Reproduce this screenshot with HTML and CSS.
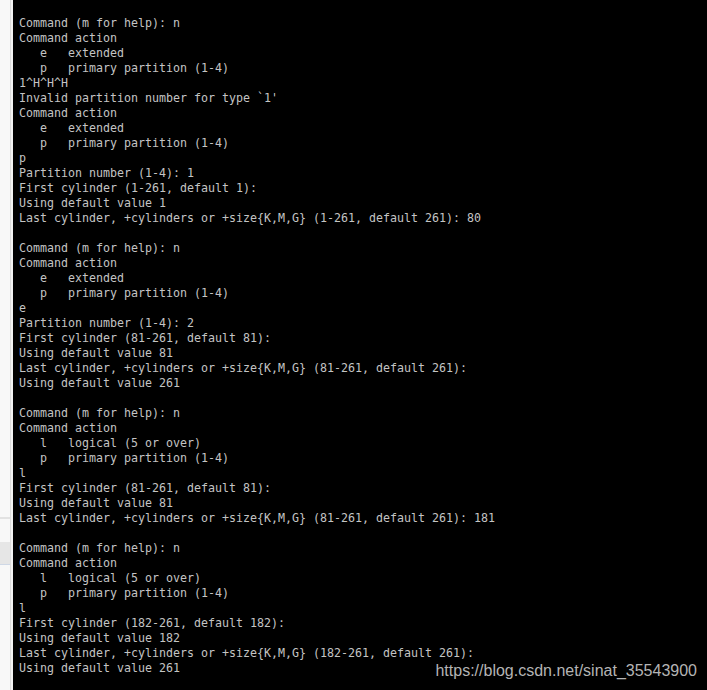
FILE: index.html
```html
<!DOCTYPE html>
<html>
<head>
<meta charset="utf-8">
<link rel="stylesheet" href="styles.css">
</head>
<body>
<div class="page">
  <div class="side">
    <div class="side-top"></div>
    <div class="side-line"></div>
    <div class="side-mid"></div>
    <div class="side-block"></div>
    <div class="side-rest"></div>
  </div>
  <div class="terminal">
<pre class="out">Command (m for help): n
Command action
   e   extended
   p   primary partition (1-4)
1^H^H^H
Invalid partition number for type `1'
Command action
   e   extended
   p   primary partition (1-4)
p
Partition number (1-4): 1
First cylinder (1-261, default 1):
Using default value 1
Last cylinder, +cylinders or +size{K,M,G} (1-261, default 261): 80

Command (m for help): n
Command action
   e   extended
   p   primary partition (1-4)
e
Partition number (1-4): 2
First cylinder (81-261, default 81):
Using default value 81
Last cylinder, +cylinders or +size{K,M,G} (81-261, default 261):
Using default value 261

Command (m for help): n
Command action
   l   logical (5 or over)
   p   primary partition (1-4)
l
First cylinder (81-261, default 81):
Using default value 81
Last cylinder, +cylinders or +size{K,M,G} (81-261, default 261): 181

Command (m for help): n
Command action
   l   logical (5 or over)
   p   primary partition (1-4)
l
First cylinder (182-261, default 182):
Using default value 182
Last cylinder, +cylinders or +size{K,M,G} (182-261, default 261):
Using default value 261</pre>
    <div class="watermark">https://blog.csdn.net/sinat_35543900</div>
  </div>
</div>
</body>
</html>
```

FILE: styles.css
```css
html, body {
  margin: 0;
  padding: 0;
  background: #000;
}
.page {
  display: flex;
  width: 707px;
  height: 690px;
  overflow: hidden;
}
.side {
  width: 10px;
  display: flex;
  flex-direction: column;
  border-right: 1px solid #dcdcdc;
  background: #f8f8f8;
  margin-right: 2px;
  outline: 2px solid #f3f3f3;
}
.side-top { height: 517px; background: #f8f8f8; }
.side-line { height: 2px; background: #e2e2e2; }
.side-mid { height: 23px; background: #f8f8f8; }
.side-block { height: 22px; background: #e6e6e6; border-bottom: 1px solid #cfd8e6; }
.side-rest { flex: 1; background: #f8f8f8; }
.terminal {
  flex: 1;
  position: relative;
  background: #000;
}
.out {
  margin: 0;
  padding: 16px 0 0 6px;
  font-family: "DejaVu Sans Mono", monospace;
  font-size: 11.63px;
  line-height: 15px;
  color: #c4c4c4;
  white-space: pre;
}
.watermark {
  position: absolute;
  right: 10px;
  top: 661px;
  font-family: "Liberation Sans", Arial, sans-serif;
  font-size: 16px;
  line-height: 20px;
  color: #b4b4b4;
}
```
